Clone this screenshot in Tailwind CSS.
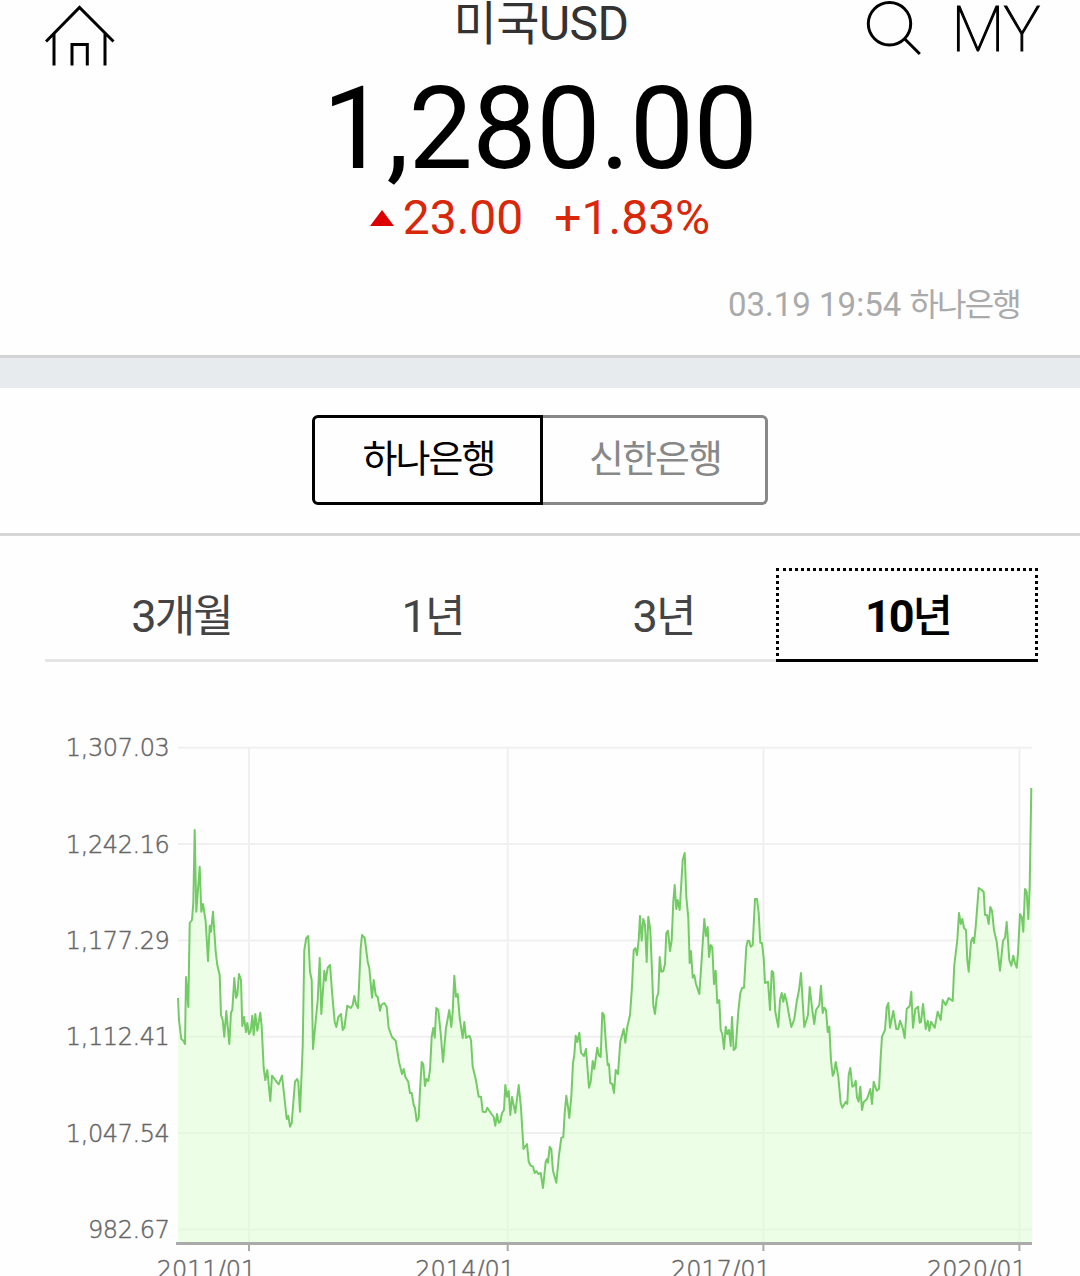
<!DOCTYPE html>
<html lang="ko">
<head>
    <meta charset="UTF-8">
    <meta name="viewport" content="width=device-width, initial-scale=1.0">
    <title>미국USD 환율</title>
    <!-- Tailwind CSS -->
    <script src="https://cdn.jsdelivr.net/npm/@tailwindcss/browser@4"></script>
</head>
<body class="bg-[#fefefe] text-black font-['Roboto','Noto_Sans_CJK_KR',sans-serif] h-[1276px] overflow-hidden">

    <!-- Header -->
    <header class="flex justify-between h-[70px] pl-[45px] pr-[38px]">
        <a href="#" class="w-[315px]" aria-label="홈">
            <svg class="block w-[70px] h-[70px]" viewBox="45 0 70 70" fill="none" stroke="#000" stroke-width="3">
                <path d="M46 41.5 79.5 7.5 113.500 41.500M54 33V65.500M105 33V65.500M72 65.500V44.500H87.300V65.500"/>
            </svg>
        </a>
        <h1 class="text-[48px] leading-[48px] text-[#333] whitespace-nowrap"><span class="text-[47px] tracking-[-0.500px]">미국</span><span class="tracking-[-0.500px]">USD</span></h1>
        <div class="flex w-[320px] justify-end">
            <a href="#" aria-label="검색">
                <svg class="block w-[60px] h-[60px]" viewBox="865 0 60 60" fill="none" stroke="#000" stroke-width="3">
                    <circle cx="889.500" cy="23.700" r="21.200"/>
                    <path d="M904.800 39 919.800 54"/>
                </svg>
            </a>
            <a href="#" class="ml-[29px]">
                <svg class="block w-[88px] h-[60px] overflow-visible" viewBox="954 0 88 60">
                    <text x="951.500" y="50.500" textLength="89" lengthAdjust="spacingAndGlyphs" class="font-thin text-[63px]" stroke="#000" stroke-width="1.200">MY</text>
                </svg>
            </a>
        </div>
    </header>

    <!-- Current rate -->
    <section class="h-[288px] border-b-[3px] border-[#d3d3d3]">
        <p class="text-center text-[114.500px] leading-[118px] tracking-[-0.500px]">1,280.00</p>
        <div class="flex items-center justify-center h-[60px] text-[48px] leading-[48px] text-[#d9270b]">
            <svg class="block w-[24px] h-[17px] mr-[9px]" viewBox="0 0 24 17"><path d="M0 16 12 0 24 16Z" fill="#dc0000"/></svg>
            <span>23.00</span>
            <span class="ml-[31px]">+1.83%</span>
        </div>
        <p class="mt-[33px] pr-[60px] text-right text-[33px] leading-[48px] text-[#aaa]">03.19 19:54 <span class="text-[32px] tracking-[-1.800px]">하나은행</span></p>
    </section>
    <div class="h-[30px] bg-[#e7ebee]"></div>

    <!-- Bank switch -->
    <section class="flex justify-center h-[148px] pt-[27px] border-b-[3px] border-[#d6d6d6] text-[38px] tracking-[-2px]">
        <button class="w-[231px] h-[90px] pb-[1px] pl-[2px] border-[3px] border-black rounded-l-[6px]">하나은행</button>
        <button class="w-[225px] h-[90px] pb-[1px] pl-[2px] border-[3px] border-l-0 border-[#888] text-[#888] rounded-r-[6px]">신한은행</button>
    </section>

    <!-- Period tabs -->
    <nav class="flex mt-[32px] ml-[45px] w-[993px] h-[94px] text-[45px] tracking-[-2px] text-[#444] text-center leading-[97px]">
        <a href="#" class="w-[271px] pl-[2px] border-b-[3px] border-[#e5e5e5]">3<span class="text-[44px]">개월</span></a>
        <a href="#" class="w-[231px] pl-[2px] border-b-[3px] border-[#e5e5e5]">1<span class="text-[44px]">년</span></a>
        <a href="#" class="w-[229px] pl-[4px] border-b-[3px] border-[#e5e5e5]">3<span class="text-[44px]">년</span></a>
        <a href="#" class="w-[262px] pl-[2px] border-[3px] border-dotted [border-bottom-style:solid] border-black text-black font-bold leading-[92px]">10<span class="text-[44px] font-medium">년</span></a>
    </nav>

    <!-- Chart -->
    <svg class="block w-[1080px] h-[614px]" viewBox="0 662 1080 614">
        <g id="grid" stroke="#f0f0f0" stroke-width="2"></g>
        <path id="area" fill="#d8ffca" fill-opacity="0.450"/>
        <path id="line" fill="none" stroke="#65c555" stroke-opacity="0.900" stroke-width="2" stroke-linejoin="round"/>
        <path d="M176 1243.500H1032" stroke="#aaa" stroke-width="3"/>
        <g id="labels" class="font-['DejaVu_Sans'] font-extralight text-[24px] tracking-[-0.400px]" fill="#666" stroke="#666" stroke-width="0.450"></g>
    </svg>

    <script>
        const rows = [[747.8, '1,307.03'], [844, '1,242.16'], [940.4, '1,177.29'], [1036.7, '1,112.41'], [1133.1, '1,047.54'], [1229.5, '982.67']];
        const years = [[249, '2011/01'], [507.7, '2014/01'], [763.4, '2017/01'], [1019.4, '2020/01']];

        const points = `178,998 179,1020 181.300,1039 183.700,1041 185,1044 186,977 188.300,1007 189.700,923 192,920 193.300,903 194.700,830 196.300,911.700
            199.700,866.700 201.300,911.700 203,904 205.700,921.700 208,961 209.700,925.700 211,931.700 213,911.700 215.700,951.700 217.300,965 219.700,975
            221,1015 222.700,1020 224.300,1036.700 226.300,1011 229.300,1044 231,1012.700 232.300,1010 234.300,978 236,997.700 237.300,995 239,974 241,980
            242.300,1026 244,1017 246,1032 247.300,1023 249,1034 250.700,1030.700 252.300,1015.700 253.700,1035 255.300,1014 257.300,1030.700 260.300,1012.700
            261.700,1026.700 263.700,1068 265.300,1080 267.300,1070 270.300,1101 272,1075.700 276,1081 278.700,1084.300 282,1075.700 284.700,1100 286.700,1119
            288.300,1115.700 290,1126.700 291.700,1123 295,1081.700 297,1079 298.300,1081.700 300,1111.700 302.700,1046.700 304.300,950 306.300,938 308.300,936
            310,971.700 311.700,980 313,1049 317.700,1000 319.700,958 321.300,1014 324.300,970.700 325.700,980.700 327.700,967.700 330,965 332.300,995
            334.700,1021.700 336.300,1027 338.300,1017 341,1014 342.700,1030 344.300,1028 347.300,1005.700 350.700,1008 352.700,1005 354.300,996 356,1004
            358,1008 360.700,948 362,935 364.700,938 367.700,961.700 369.300,968 372,997.700 373.700,980 375.700,995 377.700,997 380,1010.700 381.300,1005
            384.300,1003 386.700,1007 388.700,1028 392,1037 395.700,1040.700 399,1061.700 402,1074 403.700,1069 405.300,1076.700 408.300,1082 410,1093
            411.700,1093 413.700,1105 415,1108 416.700,1121 418.700,1118 420,1090 421.700,1062 423.300,1064 425,1086 426.300,1079 428.300,1081 430,1070
            431.700,1036.700 433.300,1028 434.700,1037.700 436.300,1008 438.300,1010 441,1036.700 443,1062 446,1028 449.300,1010 451.300,1027 452.700,1011.700
            454.300,975.700 456,996.700 457.700,994 459.700,1018 462.700,1038 464.300,1022 466,1038 469.300,1035.700 471,1040 472.700,1066.700 475.700,1079
            478.700,1096.700 481,1096.700 482.700,1111.700 485.700,1112 487.300,1107.700 490,1111.700 493.700,1117 495.300,1125.700 497,1114 498.700,1122.700
            500.300,1121.700 502,1113 504,1110 505.300,1085 507,1096.700 508.700,1091 510.300,1115 512,1097 515.300,1113 518.700,1085 521,1108 523.500,1149
            527,1144 528.700,1161.700 530.700,1165.700 533,1166.700 534.700,1173 536.300,1171 538.300,1174 540.700,1173 543,1188 545.700,1161.700 547,1159
            548,1162.700 549.700,1146.700 551.300,1149 553,1170.700 556.300,1182.700 559,1155 561.300,1138 563.300,1137 564.700,1113 566.300,1095.700 568,1107
            569.300,1118 571.300,1096.700 573,1063 574.300,1055 575.700,1035.700 577.300,1042 579.300,1032.700 581,1052.700 584,1056 586,1049 589,1087.700
            590.700,1081.700 592.700,1061 594.300,1069 597.300,1047.700 599,1055.700 600.700,1057 602.300,1012.700 604,1015 606,1045 607.700,1065 609,1064
            610.300,1083 612.300,1084 614,1093 615.700,1070 618,1074 620.300,1041.700 623.700,1029 625.300,1042.700 627.300,1026.700 630,1015 632,986.700
            633.700,950 635.300,948 637,955 638.700,940 640,916 641.700,940.700 643.300,919 645,925 646.700,962 648.300,916.700 650.300,930 651.700,963
            653.300,1005 655,1014 656.700,997.700 658.300,993 659.700,957 661.300,971.700 663.300,971 665,964 666.300,933 668,930.700 670,951 671.700,940
            673.300,901.700 674.700,885 676.300,909 677.700,900 679.700,910 682.700,860 684.700,853 686.300,896.700 688.300,918 689.700,963 691,951
            692.700,977.700 694.300,975 696,984 699.300,994 701.300,965 704.300,919 706,936 707.700,927 709,957 710.700,945 712.300,947 714,984 715.700,970.700
            717.300,1003 719.300,1000 720.700,1030 722.300,1034 724,1049 725.700,1026.700 727.300,1034 729,1030 730.700,1046 732,1017 733.700,1050 735.700,1048
            738.300,1011.700 740.300,993 742.300,987.700 744,987.700 746.300,946.700 747.700,940.700 749.300,941 750.700,946.700 752.700,945 755,899 757,899
            758.700,913 760.300,942.700 762,943 763.700,958 765,983 768,981.700 770,1010 771.700,971 773.300,972.700 775.300,1011.700 778.300,1027 780,1000
            781.700,993 783.300,1001.700 784.700,994 786.700,1001.700 789,1015 791.300,1027 794.300,1019 796.700,1001.700 799,990 801,973 802.700,1001.700
            804.300,1027 808,1015 809.700,987 812.300,1010 814.300,1024 816,1010 819.300,1005 821,985.700 822.700,1013 824.300,1007.700 826,1010 827.700,1032
            829.300,1026.700 831,1060 832.700,1075.700 834,1073 835.700,1062 838.300,1076.700 840.700,1103 842.300,1107.700 845.700,1101.700 847.300,1104
            848.700,1075 850.300,1068 852.300,1086.700 854,1085.700 855.700,1080.700 857,1097.700 858.700,1101.700 860.300,1086.700 862,1110 863.700,1102
            867,1099 870.300,1089 872,1104 873.700,1081.700 876.700,1090.700 879,1089 880.700,1056.700 882,1036.700 885,1030 886.700,1007 888.300,1003
            890,1027.700 893.300,1011 896.300,1029 898.300,1029 900,1020.700 902.700,1028 904.700,1038 906.700,1009 909.700,1006 911.300,991.700 913,1027.700
            915.300,1009 918,1006.700 919.700,1022.700 921,1022 923,1004 925.700,1029 927.700,1020.700 929.300,1030.700 931,1021.700 934.700,1027.700
            937.700,1011.700 940.700,1020 942.700,1000 945.700,1005 948.700,998 952.700,1001 954.300,965 957.300,940 959,913 960.700,924 962.300,919 964,928
            966,930 967.300,960 968.700,971.700 971,941.700 972.700,937.700 974,943 975.700,926.700 978.700,888 981.700,890 983.700,892 985,915 987,915
            988.700,924 990.300,907 992,910.700 994,930 996.700,941.700 1000,970.700 1003,940.700 1005,937.700 1006.700,922 1009.300,960 1011.300,965.700
            1013.300,955.700 1015,963 1016.700,967.700 1018,953 1020,914 1021.700,916.700 1023.300,931.700 1025,889 1026.700,891.700 1028.300,919
            1029.700,886.700 1031.300,788`.split(/\s+/).join(' L');

        let grid = '';
        let labels = '';
        rows.forEach(([y, text]) => {
            grid += `<path d="M178 ${y}H1032"/>`;
            labels += `<text x="169.500" y="${y + 8.5}" text-anchor="end">${text}</text>`;
        });
        years.forEach(([x, text]) => {
            grid += `<path d="M${x} 748V1243"/><path d="M${x} 1243V1251" stroke="#aaa"/>`;
            labels += `<text x="${x - 42.5}" y="1278" text-anchor="middle" letter-spacing="0">${text}</text>`;
        });

        document.getElementById('grid').innerHTML = grid;
        document.getElementById('labels').innerHTML = labels;
        document.getElementById('line').setAttribute('d', 'M' + points);
        document.getElementById('area').setAttribute('d', 'M' + points + ' L1032,1243 L178,1243Z');
    </script>

</body>
</html>
